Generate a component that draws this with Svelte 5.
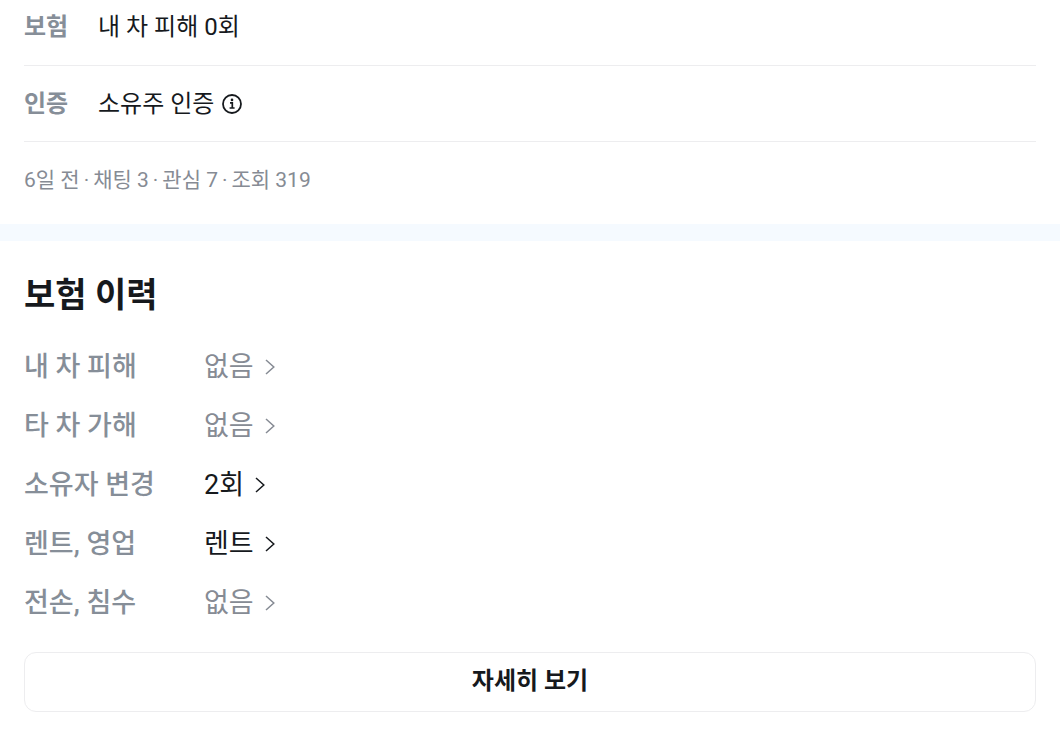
<script>
  const stats = ['6일 전', '채팅 3', '관심 7', '조회 319'];
  const history = [
    { label: '내 차 피해', value: '없음', active: false },
    { label: '타 차 가해', value: '없음', active: false },
    { label: '소유자 변경', value: '2회', active: true },
    { label: '렌트, 영업', value: '렌트', active: true },
    { label: '전손, 침수', value: '없음', active: false }
  ];
</script>

<main>
  <section class="summary">
    <dl>
      <div class="row first"><dt>보험</dt><dd>내 차 피해 0회</dd></div>
      <div class="row">
        <dt>인증</dt>
        <dd>
          소유주 인증
          <button class="info" aria-label="소유주 인증">
            <svg width="20" height="20" viewBox="0 0 20 20" fill="none" stroke="currentColor" stroke-width="1.8">
              <circle cx="10" cy="10" r="9" />
              <path d="M8 8.9h2.3v5M7.6 14h5" stroke-width="1.7" />
              <circle cx="10" cy="5.9" r="1.3" fill="currentColor" stroke="none" />
            </svg>
          </button>
        </dd>
      </div>
    </dl>
    <p class="meta">
      {#each stats as stat, i}
        {#if i > 0}<span>·</span>{/if}
        <span>{stat}</span>
      {/each}
    </p>
  </section>

  <section class="history">
    <h2>보험 이력</h2>
    <dl>
      {#each history as item}
        <div class="item">
          <dt>{item.label}</dt>
          <dd>
            <button class="value" class:active={item.active}>
              {item.value}
              <svg width="12" height="18" viewBox="0 0 12 18" fill="none" stroke="currentColor" stroke-width="1.5">
                <path d="M2 2l7.8 7L2 16" />
              </svg>
            </button>
          </dd>
        </div>
      {/each}
    </dl>
    <button class="more">자세히 보기</button>
  </section>
</main>

<style>
  :global(body) {
    margin: 0;
    background: #fff;
  }
  main {
    font-family: Roboto, 'Noto Sans CJK KR', sans-serif;
    color: #16191d;
  }
  dl, dd, p, h2 {
    margin: 0;
  }
  button {
    font: inherit;
    color: inherit;
    background: none;
    border: 0;
    padding: 0;
    cursor: pointer;
  }
  .summary {
    padding: 0 24px 28px;
    border-bottom: 17px solid #f5faff;
  }
  .row {
    display: flex;
    align-items: center;
    height: 75px;
    border-bottom: 1px solid #ededef;
    font-size: 24px;
    line-height: 36px;
  }
  .row.first {
    height: auto;
    padding: 9px 0 20px;
  }
  .row dt {
    width: 74px;
    font-weight: 700;
    color: #868e98;
  }
  .row dd {
    display: flex;
    align-items: center;
    gap: 8px;
  }
  .info {
    display: flex;
  }
  .meta {
    display: flex;
    flex-wrap: wrap;
    gap: 4px;
    padding-top: 22px;
    font-size: 21px;
    line-height: 32px;
    color: #868b94;
  }
  .history {
    padding: 31px 24px 38px;
  }
  h2 {
    font-size: 34px;
    line-height: 46px;
    font-weight: 700;
  }
  .history dl {
    padding-top: 19px;
  }
  .item {
    display: flex;
    align-items: center;
    height: 59px;
    font-size: 27px;
    line-height: 40px;
  }
  .item dt {
    width: 180px;
    font-weight: 500;
    color: #868e98;
  }
  .value {
    display: flex;
    align-items: center;
    gap: 10px;
    color: #868b94;
  }
  .value.active {
    color: #16191d;
  }
  .more {
    display: block;
    width: 100%;
    margin-top: 20px;
    height: 60px;
    padding-bottom: 8px;
    border: 1px solid #ededef;
    border-radius: 12px;
    font-size: 24px;
    font-weight: 700;
  }
</style>
